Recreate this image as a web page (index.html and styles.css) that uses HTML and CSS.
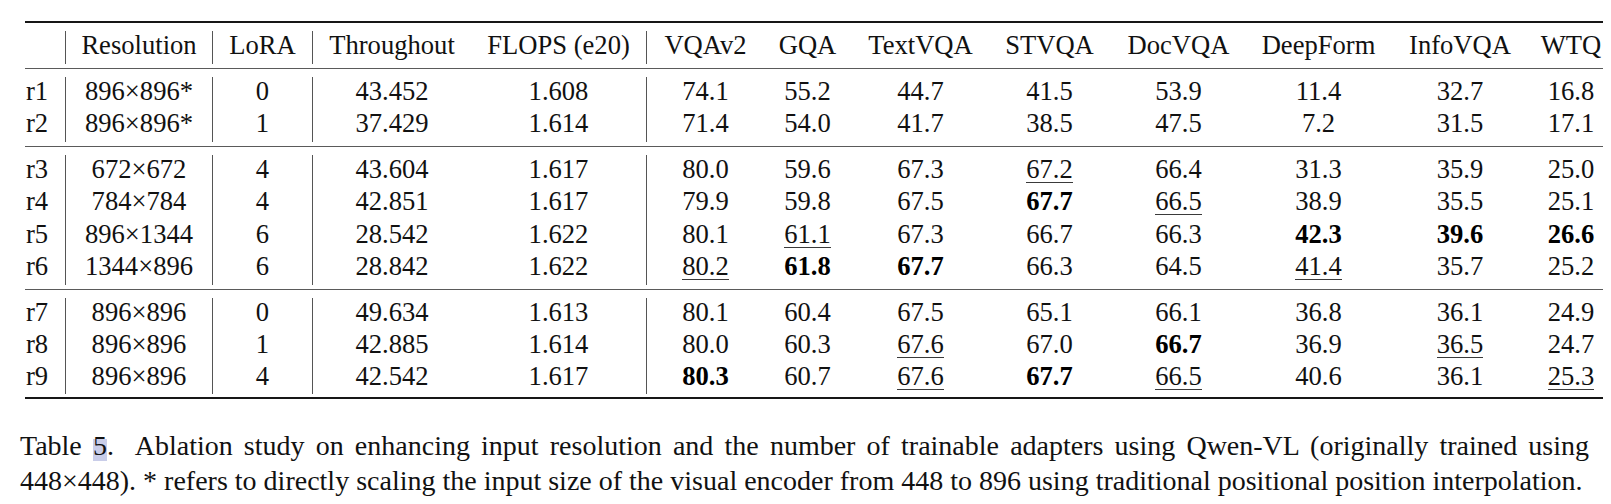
FILE: index.html
```html
<!DOCTYPE html>
<html lang="en">
<head>
<meta charset="utf-8">
<title>Table 5</title>
<link rel="stylesheet" href="styles.css">
</head>
<body>
<div class="page">
  <div class="table">
    <div class="group">
      <div class="row">
        <div></div><div>Resolution</div><div>LoRA</div><div>Throughout</div><div>FLOPS (e20)</div><div>VQAv2</div><div>GQA</div><div>TextVQA</div><div>STVQA</div><div>DocVQA</div><div>DeepForm</div><div>InfoVQA</div><div>WTQ</div>
      </div>
    </div>
    <div class="group">
      <div class="row">
        <div>r1</div><div>896×896*</div><div>0</div><div>43.452</div><div>1.608</div><div>74.1</div><div>55.2</div><div>44.7</div><div>41.5</div><div>53.9</div><div>11.4</div><div>32.7</div><div>16.8</div>
      </div>
      <div class="row">
        <div>r2</div><div>896×896*</div><div>1</div><div>37.429</div><div>1.614</div><div>71.4</div><div>54.0</div><div>41.7</div><div>38.5</div><div>47.5</div><div>7.2</div><div>31.5</div><div>17.1</div>
      </div>
    </div>
    <div class="group">
      <div class="row">
        <div>r3</div><div>672×672</div><div>4</div><div>43.604</div><div>1.617</div><div>80.0</div><div>59.6</div><div>67.3</div><div><span class="u">67.2</span></div><div>66.4</div><div>31.3</div><div>35.9</div><div>25.0</div>
      </div>
      <div class="row">
        <div>r4</div><div>784×784</div><div>4</div><div>42.851</div><div>1.617</div><div>79.9</div><div>59.8</div><div>67.5</div><div><b>67.7</b></div><div><span class="u">66.5</span></div><div>38.9</div><div>35.5</div><div>25.1</div>
      </div>
      <div class="row">
        <div>r5</div><div>896×1344</div><div>6</div><div>28.542</div><div>1.622</div><div>80.1</div><div><span class="u">61.1</span></div><div>67.3</div><div>66.7</div><div>66.3</div><div><b>42.3</b></div><div><b>39.6</b></div><div><b>26.6</b></div>
      </div>
      <div class="row">
        <div>r6</div><div>1344×896</div><div>6</div><div>28.842</div><div>1.622</div><div><span class="u">80.2</span></div><div><b>61.8</b></div><div><b>67.7</b></div><div>66.3</div><div>64.5</div><div><span class="u">41.4</span></div><div>35.7</div><div>25.2</div>
      </div>
    </div>
    <div class="group tight">
      <div class="row">
        <div>r7</div><div>896×896</div><div>0</div><div>49.634</div><div>1.613</div><div>80.1</div><div>60.4</div><div>67.5</div><div>65.1</div><div>66.1</div><div>36.8</div><div>36.1</div><div>24.9</div>
      </div>
      <div class="row">
        <div>r8</div><div>896×896</div><div>1</div><div>42.885</div><div>1.614</div><div>80.0</div><div>60.3</div><div><span class="u">67.6</span></div><div>67.0</div><div><b>66.7</b></div><div>36.9</div><div><span class="u">36.5</span></div><div>24.7</div>
      </div>
      <div class="row">
        <div>r9</div><div>896×896</div><div>4</div><div>42.542</div><div>1.617</div><div><b>80.3</b></div><div>60.7</div><div><span class="u">67.6</span></div><div><b>67.7</b></div><div><span class="u">66.5</span></div><div>40.6</div><div>36.1</div><div><span class="u">25.3</span></div>
      </div>
    </div>
  </div>
  <p class="caption">Table <span class="hl">5</span>.&nbsp; Ablation study on enhancing input resolution and the number of trainable adapters using Qwen-VL (originally trained using 448×448). * refers to directly scaling the input size of the visual encoder from 448 to 896 using traditional positional position interpolation.</p>
</div>
</body>
</html>
```
FILE: styles.css
```css
html, body {
  margin: 0;
  background: #ffffff;
}
body {
  font-family: "Liberation Serif", "Times New Roman", serif;
  color: #111111;
}
.page {
  padding: 21px 0 0 20px;
}
.table {
  margin-left: 5px;
  width: 1578px;
  border-top: 2px solid #161616;
  border-bottom: 2px solid #161616;
}
.group {
  padding: 8px 0 4px;
}
.group + .group {
  border-top: 1px solid #5a5a5a;
}
.group.tight {
  padding-bottom: 3px;
}
.row {
  display: grid;
  grid-template-columns: 40px 147px 100px 159px 175px 118px 87px 139px 119px 139px 141px 142px 72px;
  height: 32.5px;
  font-size: 26.6px;
  line-height: 28px;
}
.group.tight .row {
  height: 32px;
}
.row > div {
  text-align: center;
  white-space: nowrap;
  padding-bottom: 4px;
}
.row > div:first-child {
  text-align: left;
  padding-left: 1px;
}
.row > div:nth-child(2),
.row > div:nth-child(3),
.row > div:nth-child(4),
.row > div:nth-child(6) {
  border-left: 1px solid #555555;
}
.row > div:last-child {
  padding-left: 8px;
}
.row b {
  font-weight: 700;
  color: #000000;
}
.u {
  display: inline-block;
  line-height: 25px;
  border-bottom: 1px solid #3a3a3a;
}
.caption {
  margin: 29px 0 0;
  width: 1569px;
  font-size: 28px;
  line-height: 35.5px;
  text-align: justify;
  color: #111111;
}
.hl {
  background: linear-gradient(to bottom, transparent 0, transparent 9px, #c9cde9 9px);
}
```
